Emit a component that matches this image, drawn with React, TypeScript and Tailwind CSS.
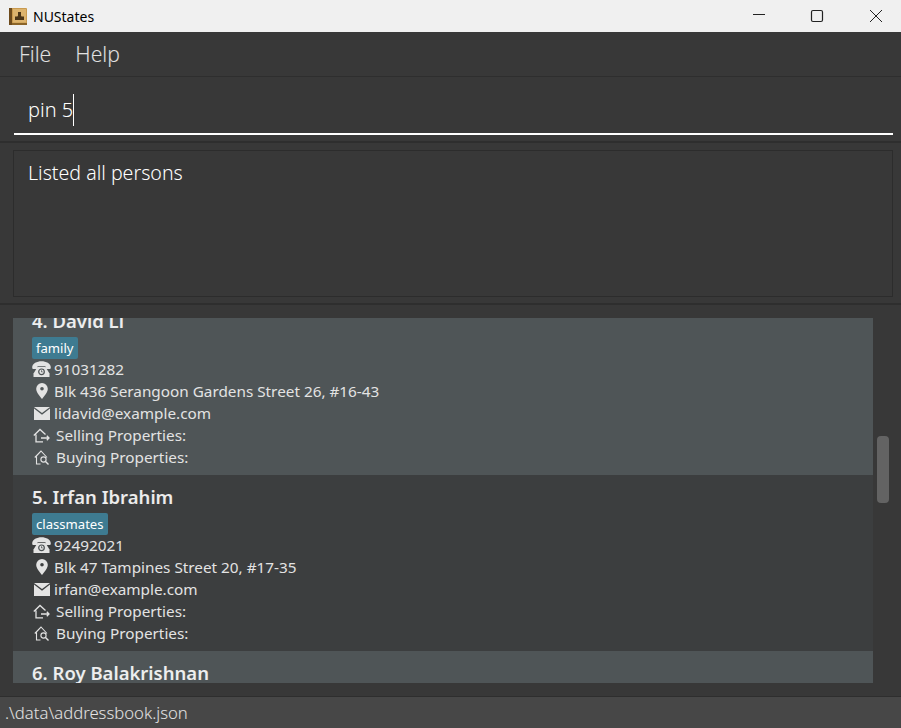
import React from "react";

const font = { fontFamily: '"Noto Sans", "Open Sans", sans-serif' };

function Phone() {
  return (
    <svg width="19" height="16" viewBox="0 0 19 16" fill="none">
      <path d="M.2 6.200C.2 2.500 5 .2 9.500.2s9.300 2.300 9.300 6c0 1.300-.5 1.800-1.300 1.800h-2.800c-.8 0-1.200-.4-1.200-1.200V5.200H5.500v1.600c0 .8-.4 1.200-1.200 1.200H1.500C.7 8 .2 7.500.2 6.200Z" fill="#e3e3e3" />
      <path d="M5.500 6h8l4 6.500V16H1.500v-3.500L5.500 6Z" fill="#e3e3e3" />
      <circle cx="9.500" cy="10.800" r="2.800" fill="none" stroke="#4b5153" strokeWidth="1.200" />
      <path d="M9.500 9.300v1.600h1.200" stroke="#4b5153" strokeWidth="0.800" />
    </svg>
  );
}
function Pin() {
  return (
    <svg width="12" height="16" viewBox="0 0 12 16">
      <path fillRule="evenodd" d="M6 0a5.800 5.800 0 0 1 5.800 5.800C11.800 9.500 8 13.500 6 16 4 13.500.2 9.500.2 5.800A5.800 5.800 0 0 1 6 0Zm0 4a1.800 1.800 0 1 0 0 3.600A1.800 1.800 0 0 0 6 4Z" fill="#e3e3e3" />
    </svg>
  );
}
function Mail() {
  return (
    <svg width="16" height="13" viewBox="0 0 16 13">
      <path d="M0 0h16L8 6 0 0Z" fill="#e3e3e3" />
      <path d="M0 1.600 8 7.800l8-6.200V13H0V1.600Z" fill="#e3e3e3" />
    </svg>
  );
}
function Sell() {
  return (
    <svg width="17" height="15" viewBox="0 0 17 15" fill="none" stroke="#e3e3e3" strokeWidth="1.300">
      <path d="M.8 7.500 7 1.500 12.500 6.500M3 6.500V13.800h7M8 10h8M13.800 7.800 16 10l-2.200 2.200" />
    </svg>
  );
}
function Buy() {
  return (
    <svg width="16" height="15" viewBox="0 0 16 15" fill="none" stroke="#e3e3e3" strokeWidth="1.100">
      <path d="M.8 7.500 7 1l6 6.500M2.500 6.500V14H6.500" />
      <circle cx="9.500" cy="9.500" r="2.600" />
      <path d="m11.500 11.500 3 3" strokeWidth="1.400" />
    </svg>
  );
}

function Row({ icon, text, gap = "ml-[3px]" }: { icon: React.ReactNode; text: string; gap?: string }) {
  return (
    <div className="flex h-[22px] items-center text-[15.300px] text-[#e3e3e3]">
      <span className="flex w-[19px] justify-center">{icon}</span>
      <span className={gap}>{text}</span>
    </div>
  );
}

function Card({ name, tag, phone, address, email, alt }: { name: string; tag: string; phone: string; address: string; email: string; alt?: boolean }) {
  return (
    <div className={`h-[176px] pl-[19px] pt-[9px] ${alt ? "bg-[#4f5557]" : "bg-[#3c3e3f]"}`}>
      <div className="h-[27px] text-[18.500px] font-semibold leading-[25px] text-white/90">{name}</div>
      <div className="mt-[2px] flex h-[22px] items-center">
        <span className="flex h-[22px] items-center rounded-[2px] bg-[#3e7b91] px-[4px] pt-[1px] text-[13.100px] text-white">{tag}</span>
      </div>
      <div className="mt-[-1px]">
        <Row icon={<Phone />} text={phone} />
        <Row icon={<Pin />} text={address} />
        <Row icon={<Mail />} text={email} />
        <Row icon={<Sell />} text="Selling Properties:" gap="ml-[5px]" />
        <Row icon={<Buy />} text="Buying Properties:" gap="ml-[5px]" />
      </div>
    </div>
  );
}

export default function App() {
  return (
    <div className="flex h-[728px] w-[901px] flex-col overflow-hidden bg-[#383838]" style={font}>
      <div className="flex h-[32px] shrink-0 items-center bg-[#f0f0f0] text-[14px] text-black">
        <svg className="ml-[9px]" width="18" height="17" viewBox="0 0 18 17">
          <rect width="18" height="17" rx="1" fill="#c99a4f" />
          <rect width="3" height="17" fill="#6d4a1c" />
          <rect x="3" y="15" width="15" height="2" fill="#8a6428" />
          <rect x="4" y="1" width="13" height="13.500" fill="#dcb36d" />
          <path d="M9 4h3v3.500l.5 1H15v3.500H6V8.500h2.500l.5-1V4Z" fill="#4a3518" />
        </svg>
        <span className="ml-[6px]">NUStates</span>
        <div className="ml-auto flex items-center">
          <svg width="14" height="14" viewBox="0 0 14 14" className="mr-[44px]"><path d="M1 5.500h12" stroke="#222" strokeWidth="1" /></svg>
          <svg width="14" height="14" viewBox="0 0 14 14" className="mr-[45px]"><rect x="1.500" y="1.500" width="11" height="11" rx="1.500" fill="none" stroke="#222" strokeWidth="1.200" /></svg>
          <svg width="14" height="14" viewBox="0 0 14 14" className="mr-[18px]"><path d="M1 1l12 12M13 1 1 13" stroke="#222" strokeWidth="1" /></svg>
        </div>
      </div>

      <div className="flex h-[45px] shrink-0 items-center gap-[24px] border-b border-[#2e2e2e] pl-[19px] text-[21.200px] font-light text-white/85">
        <span>File</span>
        <span>Help</span>
      </div>

      <div className="h-[66px] shrink-0 border-b-2 border-[#2e2e2e] pl-[14px] pr-[8px]">
        <div className="flex h-[58px] items-center border-b-2 border-white pl-[14px] pt-[9px] text-[20px] font-light text-white">
          <span>pin 5</span>
          <span className="h-[32px] w-px bg-white" />
        </div>
      </div>

      <div className="h-[162px] shrink-0 border-b-2 border-[#2e2e2e] pb-[6px] pl-[13px] pr-[8px] pt-[7px]">
        <div className="h-full border border-[#2c2c2c] pl-[14px] pt-[7px] text-[19.600px] font-light text-white">
          Listed all persons
        </div>
      </div>

      <div className="flex min-h-0 flex-1 pl-[13px] pt-[13px]">
        <div className="h-[365px] w-[860px] overflow-hidden">
          <div className="mt-[-19px]">
            <Card alt name="4. David Li" tag="family" phone="91031282" address="Blk 436 Serangoon Gardens Street 26, #16-43" email="lidavid@example.com" />
            <Card name="5. Irfan Ibrahim" tag="classmates" phone="92492021" address="Blk 47 Tampines Street 20, #17-35" email="irfan@example.com" />
            <Card alt name="6. Roy Balakrishnan" tag="colleagues" phone="92624417" address="Blk 45 Aljunied Street 85, #11-31" email="royb@example.com" />
          </div>
        </div>
        <div className="ml-[4px] mt-[118px] h-[67px] w-[12px] rounded-[4px] bg-[#636363]" />
      </div>

      <div className="flex h-[32px] shrink-0 items-center border-t border-[#2e2e2e] bg-[#474747] pl-[5px] text-[16.700px] font-light text-white/85">
        .\data\addressbook.json
      </div>
    </div>
  );
}
